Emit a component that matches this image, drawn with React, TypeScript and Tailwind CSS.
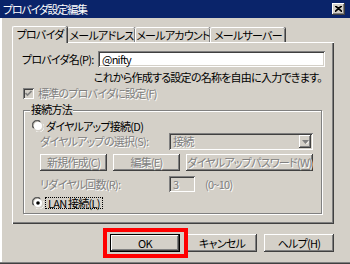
import React from 'react';

const raised =
  'shadow-[inset_-1px_-1px_#404040,inset_1px_1px_#ffffff,inset_-2px_-2px_#808080,inset_2px_2px_#d4d0c8]';
const sunken =
  'shadow-[inset_1px_1px_#808080,inset_-1px_-1px_#ffffff,inset_2px_2px_#404040,inset_-2px_-2px_#d4d0c8]';
const grayText = 'text-[#808080] [text-shadow:1px_1px_0_#ffffff]';

function Radio({ checked }: { checked?: boolean }) {
  return (
    <svg width="12" height="12" viewBox="0 0 12 12" className="shrink-0">
      <path d="M1 8 A5 5 0 0 1 8 1" fill="none" stroke="#808080" strokeWidth="1" />
      <path d="M2 8.5 A4 4 0 0 1 8.5 2" fill="none" stroke="#404040" strokeWidth="1" />
      <circle cx="6" cy="6" r="4" fill="#ffffff" />
      <path d="M11 4 A5 5 0 0 1 4 11" fill="none" stroke="#ffffff" strokeWidth="1" />
      <path d="M10 3.5 A4 4 0 0 1 3.5 10" fill="none" stroke="#d4d0c8" strokeWidth="1" />
      {checked && <circle cx="6" cy="6" r="1.8" fill="#000000" />}
    </svg>
  );
}

function Tab({ label, w, active }: { label: string; w: string; active?: boolean }) {
  return (
    <div
      className={`${w} flex items-center justify-center rounded-t-[2px] border-l border-t border-white bg-[#d4d0c8] shadow-[inset_-1px_0_#808080,1px_0_#404040] ${
        active ? 'h-[17px] -mb-px relative z-10 pb-[1px]' : 'h-[15px] pt-[1px]'
      }`}
    >
      {label}
    </div>
  );
}

function Btn({ label, w, disabled }: { label: string; w: string; disabled?: boolean }) {
  return (
    <div className={`${w} h-full flex items-center justify-center ${raised} ${disabled ? grayText : ''}`}>
      {label}
    </div>
  );
}

export default function App() {
  return (
    <div className="w-[350px] h-[264px] bg-[#d4d0c8] relative overflow-hidden flex flex-col whitespace-nowrap text-[11px] tracking-[-0.75px] leading-none text-black [font-family:'Noto_Sans_CJK_JP',sans-serif] [font-feature-settings:'palt'] shadow-[inset_0_-1px_#404040,inset_0_-2px_#808080,inset_2px_0_#ffffff,inset_1px_0_#d4d0c8]">
      {/* title bar */}
      <div className="h-[18px] bg-[#0a246a] flex items-center justify-between pl-[3px] pr-[5px] text-white">
        <span className="tracking-[-1.2px]">プロバイダ設定編集</span>
        <div className={`w-[13px] h-[12px] bg-[#d4d0c8] flex items-center justify-center ${raised}`}>
          <svg width="7" height="6" viewBox="0 0 7 6">
            <path d="M0 0 L7 6 M1 0 L7 5.2 M7 0 L0 6 M6 0 L0 5.2" stroke="#000" strokeWidth="1.1" />
          </svg>
        </div>
      </div>

      <div className="flex flex-col pl-[12px] pt-[8px]">
        {/* tabs */}
        <div className="flex items-end h-[16px]">
          <Tab label="プロバイダ" w="w-[55px]" active />
          <Tab label="メールアドレス" w="w-[68px]" />
          <Tab label="メールアカウント" w="w-[75px]" />
          <Tab label="メールサーバー" w="w-[75px]" />
        </div>

        {/* panel */}
        <div className="w-[322px] h-[182px] flex flex-col pl-[10px] pt-[9px] shadow-[inset_1px_1px_#ffffff,inset_-1px_-1px_#404040,inset_-2px_-2px_#808080]">
          <div className="flex items-center h-[16px]">
            <span className="w-[76px]">プロバイダ名(P):</span>
            <div className={`w-[227px] h-[16px] bg-white flex items-center pl-[4px] ${sunken}`}>@nifty</div>
          </div>
          <div className="mt-[5px] h-[12px] w-[300px] text-right">
            これから作成する設定の名称を自由に入力できます。
          </div>
          <div className="mt-[3px] h-[12px] flex items-center gap-[4px] pl-[1px]">
            <div className={`w-[11px] h-[11px] bg-[#d4d0c8] flex items-center justify-center ${sunken}`}>
              <svg width="7" height="7" viewBox="0 0 7 7">
                <path d="M0.5 3 L2.5 5 L6.5 1" fill="none" stroke="#808080" strokeWidth="1.6" />
              </svg>
            </div>
            <span className={grayText}>標準のプロバイダに設定(F)</span>
          </div>

          {/* group box */}
          <div className="relative mt-[11px] ml-[1px] w-[299px] h-[104px] border border-[#808080] shadow-[inset_1px_1px_#ffffff,1px_1px_#ffffff] flex flex-col pt-[9px]">
            <span className="absolute -top-[7px] left-[6px] px-[1px] bg-[#d4d0c8]">接続方法</span>

            <div className="h-[12px] flex items-center gap-[2px] pl-[8px]">
              <Radio />
              <span>ダイヤルアップ接続(D)</span>
            </div>

            <div className="mt-[1px] h-[17px] flex items-center pl-[16px]">
              <span className={`w-[129px] ${grayText}`}>ダイヤルアップの選択(S):</span>
              <div className={`w-[144px] h-full flex items-center justify-between pl-[4px] pr-[2px] bg-[#d4d0c8] ${sunken}`}>
                <span className={grayText}>接続</span>
                <div className={`w-[12px] h-[13px] flex items-center justify-center ${raised}`}>
                  <svg width="7" height="4" viewBox="0 0 7 4">
                    <path d="M0 0 H7 L3.5 4 Z" fill="#808080" />
                    <path d="M4.5 4 L7.5 1" stroke="#ffffff" strokeWidth="1" />
                  </svg>
                </div>
              </div>
            </div>

            <div className="mt-[4px] h-[17px] flex gap-[6px] pl-[16px]">
              <Btn label="新規作成(C)" w="w-[67px]" disabled />
              <Btn label="編集(E)" w="w-[67px]" disabled />
              <Btn label="ダイヤルアップパスワード(W)" w="w-[127px]" disabled />
            </div>

            <div className="mt-[5px] h-[16px] flex items-center pl-[16px]">
              <span className={`w-[129px] ${grayText}`}>リダイヤル回数(R):</span>
              <div className={`w-[26px] h-full flex items-center pl-[4px] bg-[#d4d0c8] ${sunken}`}>
                <span className={grayText}>3</span>
              </div>
              <span className={`ml-[10px] ${grayText}`}>(0~10)</span>
            </div>

            <div className="mt-[5px] h-[12px] flex items-center gap-[1px] pl-[8px]">
              <Radio checked />
              <span className="border border-dotted border-black px-[2px] h-[12px] flex items-center">LAN 接続(L)</span>
            </div>
          </div>
        </div>

        {/* dialog buttons */}
        <div className="mt-[10px] h-[18px] flex gap-[7px] pl-[98px]">
          <div className="w-[70px] h-full border border-black">
            <div className={`w-full h-full flex items-center justify-center ${raised}`}>OK</div>
          </div>
          <Btn label="キャンセル" w="w-[70px]" />
          <Btn label="ヘルプ(H)" w="w-[70px]" />
        </div>
      </div>

      {/* red highlight annotation */}
      <div className="absolute left-[103px] top-[228px] w-[85px] h-[30px] border-[4px] border-[#ff0000]" />
    </div>
  );
}
